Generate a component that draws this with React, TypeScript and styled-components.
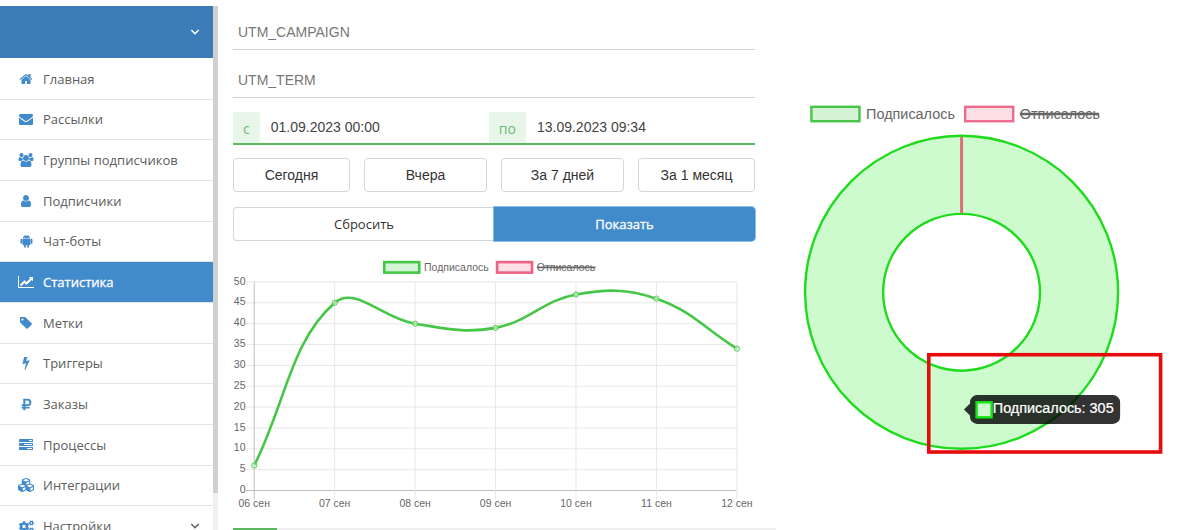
import React from "react";
import styled, { createGlobalStyle } from "styled-components";
import { FaCogs, FaCubes, FaRubleSign } from "react-icons/fa";

const ui = `"Open Sans", "Noto Sans", sans-serif`;
const arial = `"Liberation Sans", Arial, sans-serif`;

const GlobalStyle = createGlobalStyle`
  *, *::before, *::after { box-sizing: border-box; }
  body { margin: 0; background: #fff; font-family: ${ui}; font-size: 13px; color: #555; }
`;

const Page = styled.div`
  display: grid;
  grid-template-columns: 218px minmax(0, 558fr) minmax(0, 424fr);
  height: 100vh;
  overflow: hidden;
`;

/* ---------- sidebar ---------- */

const Sidebar = styled.aside`
  display: flex;
  min-height: 0;
  padding-top: 6px;
  overflow: hidden;
`;

const SidebarBody = styled.div`
  flex: 1;
  min-width: 0;
`;

const AccountButton = styled.button`
  display: flex;
  align-items: center;
  justify-content: flex-end;
  width: 100%;
  height: 52px;
  padding: 0 13px;
  border: 0;
  background: #3b7cb7;
  color: #fff;
`;

const Menu = styled.ul`
  display: grid;
  grid-auto-rows: 1fr;
  min-height: 489px;
  margin: 0;
  padding: 1px 0 0;
  list-style: none;
`;

const MenuItem = styled.li`
  display: flex;
  border-bottom: 1px solid #e4e4e4;
`;

const MenuLink = styled.a<{ $active?: boolean }>`
  flex: 1;
  display: flex;
  align-items: center;
  gap: 8px;
  padding: 0 13px 0 17px;
  text-decoration: none;
  color: ${(p) => (p.$active ? "#fff" : "#5c5c5c")};
  background: ${(p) => (p.$active ? "#428bca" : "transparent")};
  -webkit-text-stroke: ${(p) => (p.$active ? "0.3px #fff" : "0")};
`;

const IconSlot = styled.span<{ $active?: boolean }>`
  display: flex;
  justify-content: center;
  width: 18px;
  color: ${(p) => (p.$active ? "#fff" : "#428bca")};
`;

const MenuLabel = styled.span`
  flex: 1;
  white-space: nowrap;
`;

const ScrollTrack = styled.div`
  width: 5px;
  background: #f0f0f0;
`;

const ScrollThumb = styled.div`
  height: 93%;
  background: #d0d0d0;
`;

/* ---------- filters ---------- */

const Main = styled.main`
  display: flex;
  flex-direction: column;
  padding: 16px 21px 0 15px;
`;

const TextField = styled.input`
  width: 100%;
  height: 34px;
  margin-bottom: 14px;
  padding: 0 5px 2px;
  border: 0;
  border-bottom: 1px solid #d2d2d2;
  background: transparent;
  font: 14px ${arial};
  color: #555;
  outline: 0;
  &::placeholder { color: #777; opacity: 1; }
`;

const DateRange = styled.div`
  display: flex;
  height: 33px;
  border-bottom: 2px solid #5cb860;
`;

const DateAddon = styled.label`
  display: flex;
  align-items: center;
  justify-content: center;
  padding: 2px 10px 0;
  background: #e8f5e9;
  font-size: 14px;
  color: #6dbb71;
`;

const DateInput = styled.input`
  flex: 1;
  min-width: 0;
  padding: 0 11px 2px;
  border: 0;
  background: transparent;
  font: 14px ${arial};
  color: #444;
  outline: 0;
`;

const Presets = styled.div`
  display: grid;
  grid-template-columns: 117fr 123fr 123fr 117fr;
  gap: 14px;
  margin-top: 13px;
`;

const Button = styled.button`
  height: 34px;
  padding: 0 0 1px;
  border: 1px solid #d6d6d6;
  border-radius: 4px;
  background: #fff;
  font: 14px ${arial};
  color: #333;
`;

const Actions = styled.div`
  display: grid;
  grid-template-columns: 1fr 1fr;
  margin-top: 15px;
`;

const ResetButton = styled(Button)`
  padding: 0;
  font: 13px ${ui};
  border-radius: 4px 0 0 4px;
  border-right: 0;
`;

const ShowButton = styled(ResetButton)`
  border: 0;
  border-radius: 0 4px 4px 0;
  background: #428bca;
  color: #fff;
  box-shadow: 0 0 0 1px #86bce8;
  -webkit-text-stroke: 0.3px #fff;
`;

const LineChartSvg = styled.svg`
  display: block;
  width: 100%;
  margin-top: 15px;
  font-family: ${arial};
`;

const TabStrip = styled.div`
  margin: 16px -21px 0 0;
  height: 2px;
  background: #eee;
`;

const ActiveTab = styled.div`
  width: 44px;
  height: 2px;
  background: #5cb860;
`;

const PiePanel = styled.section`
  padding-top: 96px;
`;

const PieSvg = styled.svg`
  display: block;
  width: 100%;
  font-family: ${arial};
`;

/* ---------- icons ---------- */

type Glyph = { d: string; box: string; w: number; h: number };

const glyphs: Record<string, Glyph> = {
  home: {
    box: "0 0 1792 1792", w: 14, h: 14,
    d: "M1472 992v480q0 26-19 45t-45 19h-384v-384h-256v384h-384q-26 0-45-19t-19-45v-480q0-1 .5-3t.5-3l575-474 575 474q1 2 1 6zm223-69l-62 74q-8 9-21 11h-3q-13 0-21-7l-692-577-692 577q-12 8-24 7-13-2-21-11l-62-74q-8-10-7-23.5t11-21.5l719-599q32-26 76-26t76 26l244 204v-195q0-14 9-23t23-9h192q14 0 23 9t9 23v408l219 182q10 8 11 21.5t-7 23.5z",
  },
  envelope: {
    box: "0 0 1792 1792", w: 14, h: 14,
    d: "M1792 710v794q0 66-47 113t-113 47h-1472q-66 0-113-47t-47-113v-794q44 49 101 87 362 246 497 345 57 42 92.5 65.5t94.5 48 110 24.5h2q51 0 110-24.5t94.5-48 92.5-65.5q170-123 498-345 57-39 100-87zm0-294q0 79-49 151t-122 123q-376 261-468 325-10 7-42.5 31t-54 38.5-52 32.5-57.5 27-50 9h-2q-23 0-50-9t-57.5-27-52-32.5-54-38.5-42.5-31q-91-64-262-182.5t-205-142.5q-62-42-117-115.5t-55-136.5q0-78 41.5-130t118.5-52h1472q65 0 112.5 47t47.5 113z",
  },
  users: {
    box: "0 0 2048 1792", w: 16, h: 14,
    d: "M657 896q-162 5-265 128h-134q-82 0-138-40.5t-56-118.5q0-353 124-353 6 0 43.5 21t97.5 42.5 119 21.5q67 0 133-23-5 37-5 66 0 139 81 256zm1071 637q0 120-73 189.5t-194 69.5h-874q-121 0-194-69.5t-73-189.5q0-53 3.5-103.5t14-109 26.5-108.5 43-97.5 62-81 85.5-53.5 111.5-20q10 0 43 21.5t73 48 107 48 135 21.5 135-21.5 107-48 73-48 43-21.5q61 0 111.5 20t85.5 53.5 62 81 43 97.5 26.5 108.5 14 109 3.5 103.5zm-1024-1277q0 106-75 181t-181 75-181-75-75-181 75-181 181-75 181 75 75 181zm704 384q0 159-112.5 271.5t-271.5 112.5-271.5-112.5-112.5-271.5 112.5-271.5 271.5-112.5 271.5 112.5 112.5 271.5zm576 225q0 78-56 118.5t-138 40.5h-134q-103-123-265-128 81-117 81-256 0-29-5-66 66 23 133 23 59 0 119-21.5t97.5-42.5 43.5-21q124 0 124 353zm-128-609q0 106-75 181t-181 75-181-75-75-181 75-181 181-75 181 75 75 181z",
  },
  user: {
    box: "0 0 1792 1792", w: 14, h: 14,
    d: "M1536 1399q0 109-62.5 187t-150.5 78h-854q-88 0-150.5-78t-62.5-187q0-85 8.5-160.5t31.5-152 58.5-131 94-89 134.5-34.5q131 128 313 128t313-128q76 0 134.5 34.5t94 89 58.5 131 31.5 152 8.5 160.5zm-256-887q0 159-112.5 271.5t-271.5 112.5-271.5-112.5-112.5-271.5 112.5-271.5 271.5-112.5 271.5 112.5 112.5 271.5z",
  },
  android: {
    box: "1 0 26 28", w: 13, h: 14,
    d: "M6.5 9.2C6.7 6.700 8 5 9.900 4L8.700 1.900L9.300 1.500L10.600 3.700Q14 2.400 17.400 3.700L18.700 1.500L19.300 1.900L18.100 4C20 5 21.300 6.700 21.500 9.200zM10.500 5.900a.7.7 0 1 0 0 1.400a.7.7 0 1 0 0-1.400zM17.500 5.900a.7.7 0 1 0 0 1.400a.7.7 0 1 0 0-1.400zM6.300 9.800H21.700V20.500Q21.700 22.400 19.800 22.400H18.900V25.700A1.700 1.700 0 0 1 15.500 25.700V22.400H12.500V25.700A1.700 1.700 0 0 1 9.100 25.700V22.400H8.200Q6.300 22.400 6.300 20.500zM2.100 11.500A1.800 1.800 0 0 1 5.700 11.500V17.800A1.800 1.800 0 0 1 2.100 17.800zM22.300 11.500A1.800 1.800 0 0 1 25.900 11.500V17.800A1.800 1.800 0 0 1 22.300 17.800z",
  },
  chart: {
    box: "0 0 2048 1792", w: 16, h: 14,
    d: "M2048 1536v128h-2048v-1536h128v1408h1920zm-128-1248v435q0 21-19.5 29.5t-35.5-7.5l-121-121-633 633q-10 10-23 10t-23-10l-233-233-416 416-192-192 585-585q10-10 23-10t23 10l233 233 464-464-121-121q-16-16-7.5-35.5t29.5-19.5h435q14 0 23 9t9 23z",
  },
  tag: {
    box: "0 0 1792 1792", w: 14, h: 14,
    d: "M576 448q0-53-37.5-90.5t-90.5-37.5-90.5 37.5-37.5 90.5 37.5 90.5 90.5 37.5 90.5-37.5 37.5-90.5zm1067 576q0 53-37 90l-491 492q-39 37-91 37-53 0-90-37l-715-716q-38-37-64.5-101t-26.5-117v-416q0-52 38-90t90-38h416q53 0 117 26.5t102 64.5l715 714q37 39 37 91z",
  },
  bolt: {
    box: "0 0 1792 1792", w: 14, h: 14,
    d: "M1333 566q18 20 7 44l-540 1157q-13 25-42 25-4 0-14-2-17-5-25.5-19t-4.5-30l197-808-406 101q-4 1-12 1-18 0-31-11-18-15-13-39l201-825q4-14 16-23t28-9h328q19 0 32 12.5t13 29.5q0 8-5 18l-171 463 396-98q8-2 12-2 19 0 34 15z",
  },
  tasks: {
    box: "0 0 1792 1792", w: 14, h: 14,
    d: "M1024 1408h640v-128h-640v128zm-384-512h1024v-128h-1024v128zm640-512h384v-128h-384v128zm512 832v256q0 26-19 45t-45 19h-1664q-26 0-45-19t-19-45v-256q0-26 19-45t45-19h1664q26 0 45 19t19 45zm0-512v256q0 26-19 45t-45 19h-1664q-26 0-45-19t-19-45v-256q0-26 19-45t45-19h1664q26 0 45 19t19 45zm0-512v256q0 26-19 45t-45 19h-1664q-26 0-45-19t-19-45v-256q0-26 19-45t45-19h1664q26 0 45 19t19 45z",
  },
};

const Icon = ({ name }: { name: string }) => {
  const g = glyphs[name];
  return (
    <svg viewBox={g.box} width={g.w} height={g.h} fill="currentColor" fillRule={name === "android" ? "evenodd" : "nonzero"} aria-hidden="true">
      <path d={g.d} />
    </svg>
  );
};

const Chevron = () => (
  <svg width="10" height="8" viewBox="0 0 10 8" fill="none" stroke="currentColor" strokeWidth="1.5" aria-hidden="true">
    <path d="M1.300 2L5 5.700L8.700 2" />
  </svg>
);

const menu: { label: string; icon: React.ReactNode; active?: boolean; more?: boolean }[] = [
  { label: "Главная", icon: <Icon name="home" /> },
  { label: "Рассылки", icon: <Icon name="envelope" /> },
  { label: "Группы подписчиков", icon: <Icon name="users" /> },
  { label: "Подписчики", icon: <Icon name="user" /> },
  { label: "Чат-боты", icon: <Icon name="android" /> },
  { label: "Статистика", icon: <Icon name="chart" />, active: true },
  { label: "Метки", icon: <Icon name="tag" /> },
  { label: "Триггеры", icon: <Icon name="bolt" /> },
  { label: "Заказы", icon: <FaRubleSign size={13} /> },
  { label: "Процессы", icon: <Icon name="tasks" /> },
  { label: "Интеграции", icon: <FaCubes size={16} /> },
  { label: "Настройки", icon: <FaCogs size={15} />, more: true },
];

/* ---------- charts ---------- */

const Legend = ({ x, y, label, stroke, fill, off, border, textWidth }: {
  x: number; y: number; label: string; stroke: string; fill: string; off?: boolean; border: number; textWidth: number;
}) => (
  <g>
    <rect x={x} y={y} width="40" height="12" fill={fill} stroke={stroke} strokeWidth={border} />
    <text x={x + 45.5} y={y + 10} fontSize="12" fill="#666">{label}</text>
    {off && <path d={`M${x + 45.5} ${y + 6}h${textWidth}`} stroke="#666" strokeWidth="2" />}
  </g>
);

const plot = { left: 24.3, right: 576.3, top: 29.7, bottom: 268.2 };
const days = ["06 сен", "07 сен", "08 сен", "09 сен", "10 сен", "11 сен", "12 сен"];
const values = [6, 45, 40, 39, 47, 46, 34];
const xAt = (i: number) => plot.left + ((plot.right - plot.left) * i) / 6;
const yAt = (v: number) => plot.bottom - ((plot.bottom - plot.top) * v) / 50;

const smoothPath = (pts: number[][], tension: number) => {
  const controls = pts.map((p, i) => {
    const a = pts[i - 1] || p;
    const b = pts[i + 1] || p;
    const da = Math.hypot(p[0] - a[0], p[1] - a[1]);
    const db = Math.hypot(b[0] - p[0], b[1] - p[1]);
    const fa = (tension * da) / (da + db);
    const fb = (tension * db) / (da + db);
    return {
      before: [p[0] - fa * (b[0] - a[0]), p[1] - fa * (b[1] - a[1])],
      after: [p[0] + fb * (b[0] - a[0]), p[1] + fb * (b[1] - a[1])],
    };
  });
  return pts
    .map((p, i) => (i === 0 ? `M${p}` : `C${controls[i - 1].after} ${controls[i].before} ${p}`))
    .join(" ");
};

const LineChart = () => {
  const pts = values.map((v, i) => [xAt(i), yAt(v)]);
  const ticks = [0, 5, 10, 15, 20, 25, 30, 35, 40, 45, 50];
  return (
    <LineChartSvg viewBox="0 0 597 293" role="img" aria-label="Подписки по дням">
      <Legend x={173} y={7} label="Подписалось" stroke="#46c646" fill="#d5f4d5" border={3} textWidth={74} />
      <Legend x={302} y={7} label="Отписалось" stroke="#ee6384" fill="#ffdfe6" border={3} textWidth={67} off />
      {ticks.map((t) => (
        <g key={t}>
          <path d={`M${plot.left - 10} ${yAt(t)}H${plot.right}`} stroke={t ? "#e5e5e5" : "#b4b4b4"} />
          <text x={plot.left - 10} y={yAt(t) + 3} fontSize="12" fill="#666" textAnchor="end">{t}</text>
        </g>
      ))}
      {days.map((d, i) => (
        <g key={d}>
          <path d={`M${xAt(i)} ${plot.top}V${plot.bottom + 10}`} stroke={i ? "#e5e5e5" : "#b4b4b4"} />
          <text x={xAt(i)} y={plot.bottom + 19} fontSize="12" fill="#666" textAnchor="middle">{d}</text>
        </g>
      ))}
      <path d={smoothPath(pts, 0.4)} fill="none" stroke="#46c646" strokeWidth="3" />
      {pts.map(([x, y]) => (
        <circle key={x} cx={x} cy={y} r="3" fill="#d5f4d5" fillOpacity="0.6" stroke="#46c646" />
      ))}
    </LineChartSvg>
  );
};

const PieChart = () => (
  <PieSvg viewBox="0 0 353 312" role="img" aria-label="Соотношение подписок">
    <Legend x={29.5} y={9} label="Подписалось" stroke="#46c646" fill="#d5f4d5" border={2} textWidth={74} />
    <Legend x={157.5} y={9} label="Отписалось" stroke="#ee6b8c" fill="#ffdfe6" border={2} textWidth={66} off />
    <circle cx="154.500" cy="163.400" r="97.800" fill="none" stroke="#cdfbcd" strokeWidth="65" />
    <circle cx="154.500" cy="163.400" r="130.300" fill="none" stroke="#1edb1e" strokeWidth="2" />
    <circle cx="154.500" cy="163.400" r="65.300" fill="none" stroke="#1edb1e" strokeWidth="2" />
    <path d="M154.500 34V97.500" stroke="#dc7078" strokeWidth="2.500" />
    <path d="M156.500 261l5-5v-1a6 6 0 0 1 6-6h113a6 6 0 0 1 6 6v12a6 6 0 0 1-6 6h-113a6 6 0 0 1-6-6v-1z" fill="#000" fillOpacity="0.800" />
    <rect x="167" y="255" width="12.500" height="12.500" fill="#cdfbcd" stroke="#14e614" strokeWidth="2" />
    <text x="180.500" y="264" fontSize="12" fill="#fff" stroke="#fff" strokeWidth="0.2">Подписалось: 305</text>
    <rect x="127.200" y="215.400" width="193" height="81" fill="none" stroke="#e60c0c" strokeWidth="3" />
  </PieSvg>
);

export default function App() {
  return (
    <>
      <GlobalStyle />
      <Page>
        <Sidebar>
          <SidebarBody>
            <AccountButton type="button" aria-label="Аккаунт"><Chevron /></AccountButton>
            <nav>
              <Menu>
                {menu.map((m) => (
                  <MenuItem key={m.label}>
                    <MenuLink href="#" $active={m.active}>
                      <IconSlot $active={m.active}>{m.icon}</IconSlot>
                      <MenuLabel>{m.label}</MenuLabel>
                      {m.more && <Chevron />}
                    </MenuLink>
                  </MenuItem>
                ))}
              </Menu>
            </nav>
          </SidebarBody>
          <ScrollTrack><ScrollThumb /></ScrollTrack>
        </Sidebar>

        <Main>
          <TextField placeholder="UTM_CAMPAIGN" aria-label="UTM_CAMPAIGN" />
          <TextField placeholder="UTM_TERM" aria-label="UTM_TERM" />
          <DateRange>
            <DateAddon htmlFor="from">с</DateAddon>
            <DateInput id="from" defaultValue="01.09.2023 00:00" />
            <DateAddon htmlFor="to">по</DateAddon>
            <DateInput id="to" defaultValue="13.09.2023 09:34" />
          </DateRange>
          <Presets>
            <Button type="button">Сегодня</Button>
            <Button type="button">Вчера</Button>
            <Button type="button">За 7 дней</Button>
            <Button type="button">За 1 месяц</Button>
          </Presets>
          <Actions>
            <ResetButton type="button">Сбросить</ResetButton>
            <ShowButton type="button">Показать</ShowButton>
          </Actions>
          <LineChart />
          <TabStrip><ActiveTab /></TabStrip>
        </Main>

        <PiePanel>
          <PieChart />
        </PiePanel>
      </Page>
    </>
  );
}
